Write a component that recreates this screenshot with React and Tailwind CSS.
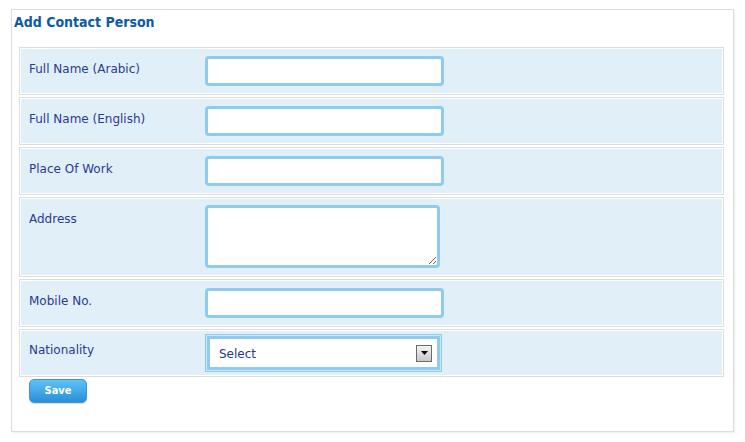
import { useState } from 'react';

const font = { fontFamily: '"DejaVu Sans", Tahoma, sans-serif' };
const condensed = { fontFamily: '"DejaVu Sans Condensed", "DejaVu Sans", Tahoma, sans-serif' };

function Row({ label, height = 'h-[48px]', children, labelPad = 'pt-[12px]' }) {
  return (
    <div className={`border border-[#dcdcdc] ${height}`}>
      <div className="h-full border border-white bg-[#e1eff9] flex">
        <div className={`w-[184px] shrink-0 pl-[8px] ${labelPad} text-[12px] leading-[16px] text-[#2c3a8f]`}>
          {label}
        </div>
        {children}
      </div>
    </div>
  );
}

function TextBox({ name, value, onChange }) {
  return (
    <input
      name={name}
      value={value}
      onChange={onChange}
      className="mt-[7px] w-[239px] h-[30px] border-[3px] border-[#8ecbef] rounded-[4px] bg-white outline-none px-1 text-[12px]"
    />
  );
}

export default function App() {
  const [form, setForm] = useState({ arabic: '', english: '', work: '', address: '', mobile: '', nationality: '' });

  const handleChange = e => {
    setForm({ ...form, [e.target.name]: e.target.value });
  };

  return (
    <div className="w-[745px] h-[442px] bg-white pt-[9px] pl-[11px]" style={font}>
      <div className="w-[723px] h-[423px] border border-[#dcdcdc] shadow-[1px_1px_2px_rgba(0,0,0,0.08)] bg-white">
        <h2 className="pl-[2px] pt-[3px] text-[14px] leading-[18px] font-bold text-[#0b5aa6]" style={condensed}>
          Add Contact Person
        </h2>
        <div className="ml-[7px] mt-[16px] w-[705px] flex flex-col gap-[2px]">
          <Row label="Full Name (Arabic)">
            <TextBox name="arabic" value={form.arabic} onChange={handleChange} />
          </Row>
          <Row label="Full Name (English)">
            <TextBox name="english" value={form.english} onChange={handleChange} />
          </Row>
          <Row label="Place Of Work">
            <TextBox name="work" value={form.work} onChange={handleChange} />
          </Row>
          <Row label="Address" height="h-[80px]">
            <textarea
              name="address"
              value={form.address}
              onChange={handleChange}
              className="mt-[6px] w-[235px] h-[63px] border-[3px] border-[#8ecbef] rounded-[4px] bg-white outline-none text-[12px]"
            />
          </Row>
          <Row label="Mobile No.">
            <TextBox name="mobile" value={form.mobile} onChange={handleChange} />
          </Row>
          <Row label="Nationality" labelPad="pt-[11px]">
            <div className="mt-[3px] w-[237px] h-[38px] border border-[#8ecbef] bg-[#cfe8f8] p-px">
              <div className="h-full border-[3px] border-[#8ecbef] bg-white flex items-center justify-between pl-[9px] pr-[5px]">
                <span className="pt-px text-[12px] text-[#1e3a8a]">Select</span>
                <div className="w-[16px] h-[17px] border border-[#6b6b6b] bg-gradient-to-b from-[#f4f4f4] to-[#c8c8c8] flex items-center justify-center">
                  <svg width="7" height="4" viewBox="0 0 7 4">
                    <path d="M0 0h7L3.5 4z" fill="#000" />
                  </svg>
                </div>
              </div>
            </div>
          </Row>
        </div>
        <button
          type="button"
          className="ml-[17px] mt-px w-[58px] h-[24px] rounded-[5px] border border-[#3b95d6] bg-gradient-to-b from-[#5cc4f7] to-[#2a8ed8] text-white text-[11px] font-bold shadow-[0_1px_1px_rgba(0,0,0,0.15)]"
          style={condensed}
        >
          Save
        </button>
      </div>
    </div>
  );
}
